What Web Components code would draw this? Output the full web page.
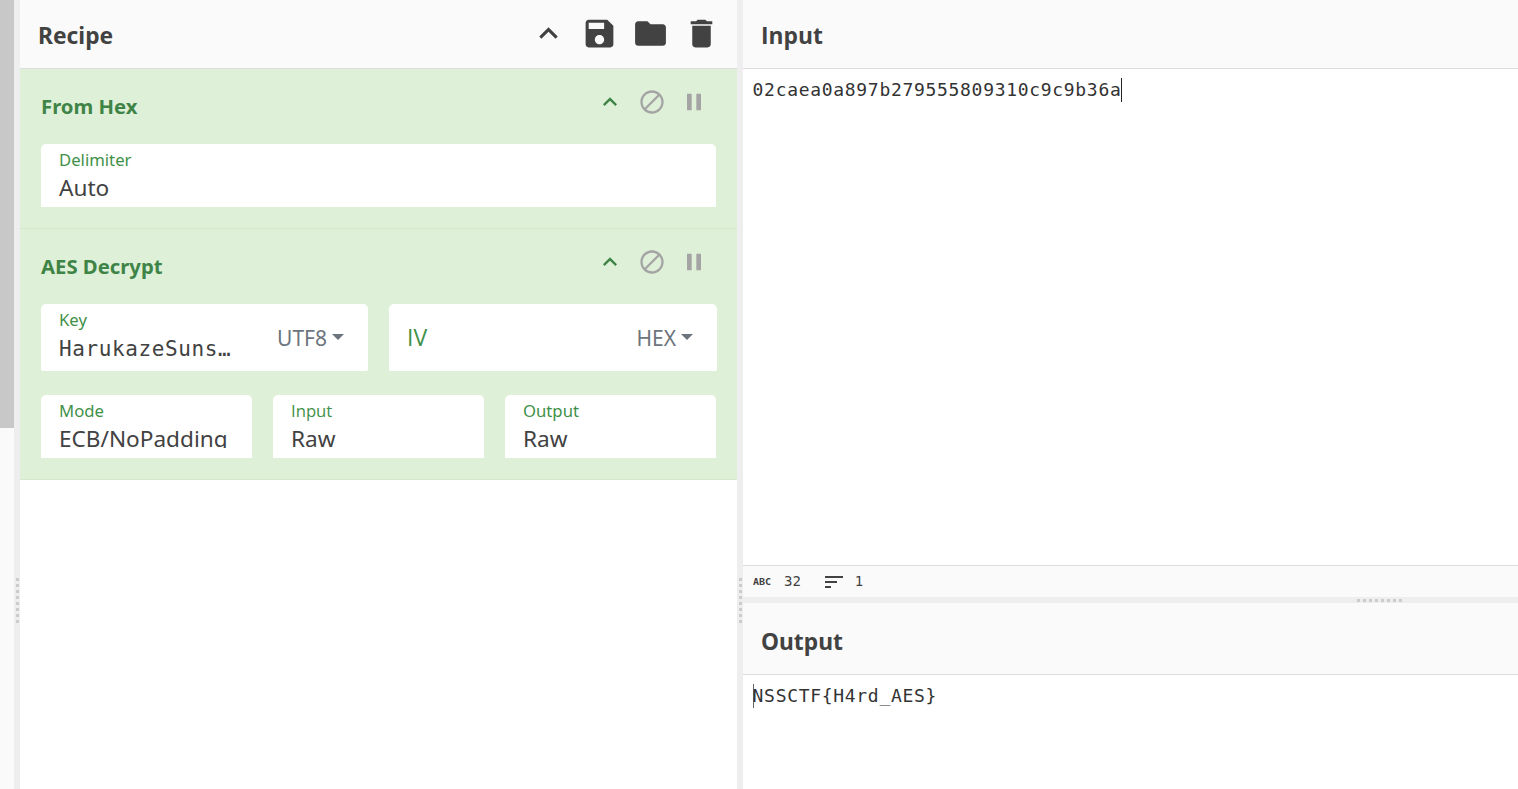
<!DOCTYPE html>
<html><head><meta charset="utf-8"><title>Recipe</title>
<style>
html,body{margin:0;height:100%;overflow:hidden;background:#fff}
body{font-family:"Noto Sans","Open Sans",sans-serif;color:#424242}
</style></head><body>
<app-root></app-root>
<script>
const P={
save:'M17 3H5c-1.11 0-2 .9-2 2v14c0 1.1.89 2 2 2h14c1.1 0 2-.9 2-2V7l-4-4zm-5 16c-1.66 0-3-1.34-3-3s1.34-3 3-3 3 1.34 3 3-1.34 3-3 3zm3-10H5V5h10v4z',
folder:'M10 4H4c-1.1 0-1.99.9-1.99 2L2 18c0 1.1.9 2 2 2h16c1.1 0 2-.9 2-2V8c0-1.1-.9-2-2-2h-8l-2-2z',
del:'M6 19c0 1.1.9 2 2 2h8c1.1 0 2-.9 2-2V7H6v12zM19 4h-3.5l-1-1h-5l-1 1H5v2h14V4z',
up:'M7.41 15.41L12 10.83l4.59 4.58L18 14l-6-6-6 6z',
block:'M12 2C6.48 2 2 6.48 2 12s4.48 10 10 10 10-4.48 10-10S17.52 2 12 2zM4 12c0-4.42 3.58-8 8-8 1.85 0 3.55.63 4.9 1.69L5.69 16.9C4.63 15.55 4 13.85 4 12zm8 8c-1.85 0-3.55-.63-4.9-1.69L18.31 7.1C19.37 8.45 20 10.15 20 12c0 4.42-3.58 8-8 8z',
pause:'M6 19h4V5H6v14zm8-14v14h4V5h-4z',
sort:'M3 18h6v-2H3v2zM3 6v2h18V6H3zm0 7h12v-2H3v2z'};
class Base extends HTMLElement{
  constructor(){super();this.attachShadow({mode:'open'});}
  connectedCallback(){this.shadowRoot.innerHTML=this.render();}
}
class MIcon extends Base{
  render(){const s=this.getAttribute('size')||24;
  return `<style>:host{display:block;width:${s}px;height:${s}px;flex:none;color:${this.getAttribute('color')||'inherit'}}svg{display:block;width:100%;height:100%;fill:currentColor}</style><svg viewBox="0 0 24 24"><path d="${P[this.getAttribute('name')]}"/></svg>`;}
}
class PaneHead extends Base{
  render(){const t=this.getAttribute('title');const h=this.getAttribute('h')||69;
  return `<style>:host{display:flex;align-items:center;box-sizing:border-box;background:#fafafa;border-bottom:1px solid #ddd;padding:0 17.5px 0 18px;height:${h}px;flex:none}
  h2{margin:${h>69?'7px':'4px'} 0 0;font:700 22.8px/1 ${t==='Input'?'"Open Sans",':''}"Noto Sans",sans-serif;color:#424242;flex:1}
  .b{display:flex;gap:14px;margin-top:-2px}</style><h2>${t}</h2><div class="b"><slot></slot></div>`;}
}
class Field extends Base{
  render(){const mono=this.hasAttribute('mono'),drop=this.getAttribute('drop'),lab=this.getAttribute('label'),val=this.getAttribute('value');
  const lf=(lab==='Input'||lab==='IV')?'"Open Sans",':'';
  return `<style>:host{display:block;background:#fff;border-radius:5px 5px 0 0;box-sizing:border-box;height:63px;padding:0 18px;overflow:hidden}
  :host([tall]){height:67px;border-radius:5px 5px 2px 2px}
  .w{display:flex;align-items:center;height:100%}
  .m{flex:1;min-width:0;align-self:flex-start}
  .l{font:16.7px/16px ${lf}"Noto Sans",sans-serif;color:#3f9149;padding-top:8px}
  .v{font-size:22.6px;line-height:30px;color:#424242;margin-top:5px;height:24px;white-space:nowrap}
  :host([clip]) .v{overflow:hidden}
  .v.mono{font:21px/30px "DejaVu Sans Mono",monospace;letter-spacing:.6px;height:32px;margin-top:6px}
  .big{font:23px/67px "Open Sans",sans-serif;color:#3f9149}
  .d{font-size:21px;color:#6c757d;display:flex;align-items:center;gap:5px;padding-right:6px;margin-top:1px}
  .c{width:0;height:0;border:6px solid transparent;border-top-color:#6c757d;border-bottom:0;margin-top:-2px}
  </style><div class="w"><div class="m">${val===null?`<div class="big">${lab}</div>`:`<div class="l">${lab}</div><div class="v ${mono?'mono':''}">${val}</div>`}</div>${drop?`<div class="d">${drop}<span class="c"></span></div>`:''}</div>`;}
}
class Op extends Base{
  render(){return `<style>:host{display:block;background:#dff0d8;border-bottom:1px solid #d4e9cb;padding:0 21px 21px;box-sizing:border-box}
  .h{display:flex;align-items:center;height:75px;padding-right:8px}
  .t{flex:1;font:700 20.3px/1 "Noto Sans",sans-serif;color:#3f8447}
  .i{display:flex;gap:14px;margin-top:-10px}
  .f{display:flex;flex-direction:column;gap:24px}</style>
  <div class="h"><div class="t">${this.getAttribute('title')}</div><div class="i"><m-icon name="up" size="28" color="#3f8447"></m-icon><m-icon name="block" size="28" color="#a4a4a4"></m-icon><m-icon name="pause" size="28" color="#a4a4a4"></m-icon></div></div><div class="f"><slot></slot></div>`;}
}
class Row extends Base{
  render(){return `<style>:host{display:grid;grid-template-columns:${this.getAttribute('cols')};column-gap:21px}</style><slot></slot>`;}
}
class Gutter extends Base{
  render(){return `<style>:host{display:block;background:#eee;width:6px;flex:none;position:relative}
  .g{position:absolute;left:2px;top:578px;width:3px;height:46px;background:repeating-linear-gradient(to bottom,#ccc 0 3px,transparent 3px 6px)}</style><div class="g"></div>`;}
}
class Hgut extends Base{
  render(){return `<style>:host{display:block;background:#eee;height:6px;flex:none;position:relative}
  .g{position:absolute;top:2px;left:614px;height:3px;width:46px;background:repeating-linear-gradient(to right,#ccc 0 3px,transparent 3px 6px)}</style><div class="g"></div>`;}
}
class Mono extends Base{
  render(){const caret=this.getAttribute('caret');
  return `<style>:host{display:block;flex:1;min-height:0;background:#fff;padding:9px 0 0 9.6px;font:18px/20px "DejaVu Sans Mono",monospace;letter-spacing:.69px;color:#333;white-space:pre}
  .c{display:inline-block;width:1px;height:24px;background:#222;vertical-align:-6px;letter-spacing:0}
  .s{margin-right:-1px;background:#666}</style>${caret==='start'?'<span class="c s"></span>':''}<slot></slot>${caret==='end'?'<span class="c"></span>':''}`;}
}
class Status extends Base{
  render(){return `<style>:host{display:flex;align-items:center;height:32px;box-sizing:border-box;background:#fafafa;border-top:1px solid #ddd;padding:0 0 0 10px;font:14px "DejaVu Sans Mono",monospace;color:#424242;flex:none}
  .a{font:bold 8px "DejaVu Sans Mono",monospace;width:31px;letter-spacing:0;margin-top:2px}
  .a span{display:inline-block;transform:scaleX(1.25);transform-origin:left center}
  .n{margin-right:21px;margin-top:-1px}.s{margin-right:9px}.o{margin-top:-1px}</style>
  <span class="a"><span>ABC</span></span><span class="n">32</span><m-icon class="s" name="sort" size="24"></m-icon><span class="o">1</span>`;}
}
class AppRoot extends Base{
  render(){return `<style>:host{display:flex;width:1518px;height:789px;overflow:hidden}
  .bar{width:14px;flex:none;background:#fafafa}.thumb{height:428px;background:#c8c8c8}
  .col{display:flex;flex-direction:column;min-width:0}
  .rec{width:717px;flex:none;background:#fff}
  .io{flex:1;background:#fff}
  .o{height:186px;flex:none}
  </style>
  <div class="bar"><div class="thumb"></div></div>
  <g-utter></g-utter>
  <div class="col rec">
    <pane-head title="Recipe"><m-icon name="up" size="37"></m-icon><m-icon name="save" size="37"></m-icon><m-icon name="folder" size="37"></m-icon><m-icon name="del" size="37"></m-icon></pane-head>
    <op-card title="From Hex"><op-row cols="1fr"><op-field label="Delimiter" value="Auto"></op-field></op-row></op-card>
    <op-card title="AES Decrypt">
      <op-row cols="327px 328px"><op-field tall mono label="Key" value="HarukazeSuns…" drop="UTF8"></op-field><op-field tall label="IV" drop="HEX"></op-field></op-row>
      <op-row cols="1fr 1fr 1fr"><op-field clip label="Mode" value="ECB/NoPadding"></op-field><op-field label="Input" value="Raw"></op-field><op-field label="Output" value="Raw"></op-field></op-row>
    </op-card>
  </div>
  <g-utter></g-utter>
  <div class="col io">
    <pane-head title="Input"></pane-head>
    <mono-area caret="end">02caea0a897b279555809310c9c9b36a</mono-area>
    <status-bar></status-bar>
    <h-gut></h-gut>
    <div class="col o">
      <pane-head title="Output" h="72"></pane-head>
      <mono-area caret="start">NSSCTF{H4rd_AES}</mono-area>
    </div>
  </div>`;}
}
customElements.define('m-icon',MIcon);
customElements.define('pane-head',PaneHead);
customElements.define('op-field',Field);
customElements.define('op-card',Op);
customElements.define('op-row',Row);
customElements.define('g-utter',Gutter);
customElements.define('h-gut',Hgut);
customElements.define('mono-area',Mono);
customElements.define('status-bar',Status);
customElements.define('app-root',AppRoot);
</script>
</body></html>
